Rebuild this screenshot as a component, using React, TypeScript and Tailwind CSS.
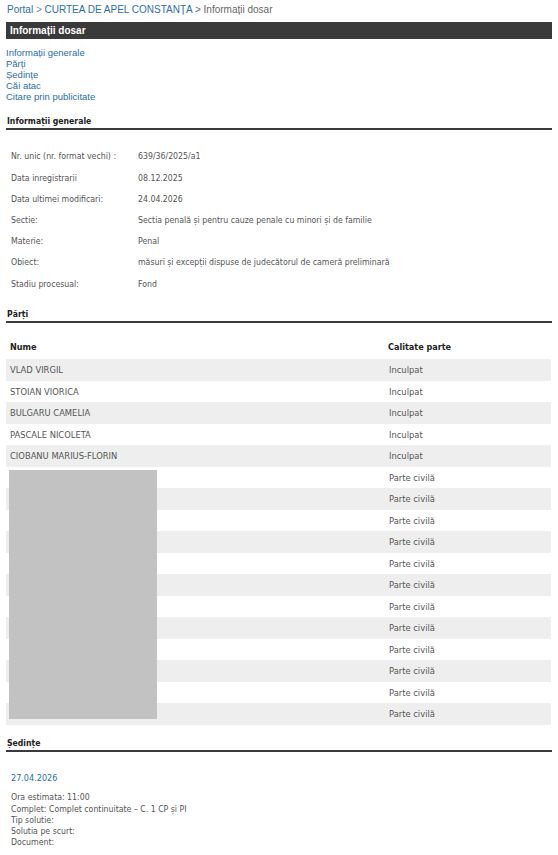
const parti: { nume: string; calitate: string }[] = [
  { nume: 'VLAD VIRGIL', calitate: 'Inculpat' },
  { nume: 'STOIAN VIORICA', calitate: 'Inculpat' },
  { nume: 'BULGARU CAMELIA', calitate: 'Inculpat' },
  { nume: 'PASCALE NICOLETA', calitate: 'Inculpat' },
  { nume: 'CIOBANU MARIUS-FLORIN', calitate: 'Inculpat' },
  ...Array.from({ length: 12 }, () => ({ nume: '', calitate: 'Parte civilă' })),
];

const info: [string, string][] = [
  ['Nr. unic (nr. format vechi) :', '639/36/2025/a1'],
  ['Data inregistrarii', '08.12.2025'],
  ['Data ultimei modificari:', '24.04.2026'],
  ['Sectie:', 'Sectia penală și pentru cauze penale cu minori și de familie'],
  ['Materie:', 'Penal'],
  ['Obiect:', 'măsuri și excepții dispuse de judecătorul de cameră preliminară'],
  ['Stadiu procesual:', 'Fond'],
];

function SectionTitle({ children }: { children: React.ReactNode }) {
  return (
    <div className="border-b-2 border-[#3a3a3a] pb-[1px] pl-[1px] font-bold text-[8.6px] leading-[12px] text-[#222]">
      {children}
    </div>
  );
}

export default function App() {
  return (
    <div className="h-[855px] overflow-hidden bg-white px-[6px] pt-[4px] font-['DejaVu_Sans_Condensed','DejaVu_Sans',sans-serif] text-[#555]">
      {/* breadcrumb */}
      <div className="pl-[1px] font-['Liberation_Sans',Arial,sans-serif] text-[10px] leading-[12px] text-[#2a6fa8]">
        <span>Portal</span>
        <span className="text-[#888]"> &gt; </span>
        <span>CURTEA DE APEL CONSTANȚA</span>
        <span className="text-[#666]"> &gt; Informații dosar</span>
      </div>

      <div className="mt-[6px] flex h-[17px] items-center bg-[#3a3a3a] pl-[4px] font-['Liberation_Sans',Arial,sans-serif] text-[10px] font-bold text-white">
        Informații dosar
      </div>

      <div className="mt-[8px] flex flex-col font-['Liberation_Sans',Arial,sans-serif] text-[9.5px] leading-[11px] text-[#2a6fa8]">
        <a>Informații generale</a>
        <a>Părți</a>
        <a>Ședințe</a>
        <a>Căi atac</a>
        <a>Citare prin publicitate</a>
      </div>

      <div className="mt-[13px]">
        <SectionTitle>Informații generale</SectionTitle>
      </div>
      <div className="mt-[16.4px] flex flex-col pl-[5px] text-[8.7px]">
        {info.map(([k, v]) => (
          <div key={k} className="flex h-[21.2px] items-center">
            <div className="w-[127px] shrink-0">{k}</div>
            <div>{v}</div>
          </div>
        ))}
      </div>

      <div className="mt-[13.2px]">
        <SectionTitle>Părți</SectionTitle>
      </div>
      <div className="mt-[13.5px] flex h-[23px] items-center text-[9px] font-bold text-[#222]">
        <div className="w-[382px] pl-[4px]">Nume</div>
        <div>Calitate parte</div>
      </div>
      <div className="relative mr-[1px]">
        {parti.map((p, i) => (
          <div key={i} className={`flex h-[21.5px] items-center text-[9.3px] ${i % 2 === 0 ? 'bg-[#eeeeee]' : 'bg-white'}`}>
            <div className="w-[382px] pl-[4px]">{p.nume}</div>
            <div className="pl-[1px]">{p.calitate}</div>
          </div>
        ))}
        <div className="absolute left-[3px] top-[110.5px] h-[249px] w-[148px] bg-[#c2c2c2]" />
      </div>

      <div className="mt-[12px]">
        <SectionTitle>Ședințe</SectionTitle>
      </div>
      <div className="mt-[20px] pl-[5px] text-[9px] leading-[12px] text-[#2a6fa8]">27.04.2026</div>
      <div className="mt-[8.4px] flex flex-col pl-[5px] text-[8.7px] leading-[11.25px]">
        <div>Ora estimata: 11:00</div>
        <div>Complet: Complet continuitate – C. 1 CP și PI</div>
        <div>Tip solutie:</div>
        <div>Solutia pe scurt:</div>
        <div>Document:</div>
      </div>
    </div>
  );
}
